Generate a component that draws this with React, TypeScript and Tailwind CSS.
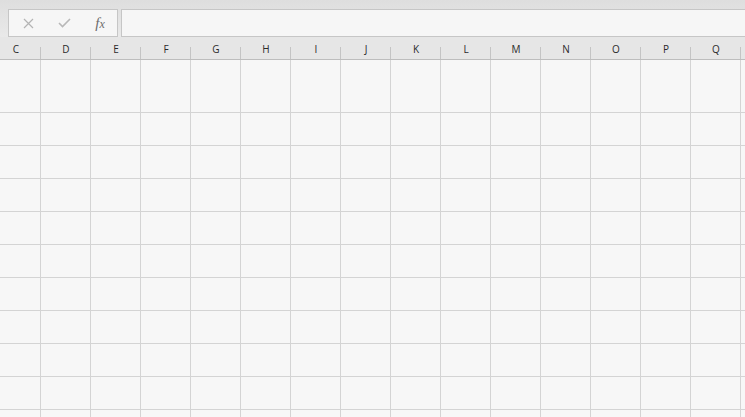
import React from "react";

const cols = ["C","D","E","F","G","H","I","J","K","L","M","N","O","P","Q",""];
const rowHeights = [52, 32, 32, 32, 32, 32, 32, 32, 32, 32, 32];

export default function App() {
  return (
    <div className="w-[745px] h-[417px] overflow-hidden bg-[#f7f7f7] flex flex-col" style={{ fontFamily: '"Open Sans", "Liberation Sans", sans-serif' }}>
      <div className="h-[37px] shrink-0 bg-gradient-to-b from-[#dedede] to-[#e9e9e9] flex items-start pt-[9px] pl-[8px] gap-[3px]">
        <div className="w-[110px] h-[28px] border border-[#c6c6c6] bg-[#f6f6f6] flex items-center">
          <div className="w-[37px] flex justify-center pl-[2px]">
            <svg width="11" height="11" viewBox="0 0 11 11"><path d="M1 1L10 10M10 1L1 10" stroke="#b4b4b4" strokeWidth="1.2" /></svg>
          </div>
          <div className="w-[37px] flex justify-center">
            <svg width="13" height="10" viewBox="0 0 13 10"><path d="M1 5L4.5 8.5L12 1" stroke="#b8b8b8" strokeWidth="1.6" fill="none" /></svg>
          </div>
          <div className="w-[34px] flex justify-center">
            <span className="text-[15px] italic text-[#6c6c6c] leading-none" style={{ fontFamily: '"Liberation Serif", serif' }}>f<span className="text-[12px]">x</span></span>
          </div>
        </div>
        <div className="flex-1 h-[28px] border-y border-l border-[#c6c6c6] bg-[#f6f6f6]" />
      </div>
      <div className="h-[23px] shrink-0 bg-[#e6e6e6] border-b border-[#bdbdbd] overflow-hidden">
        <div className="ml-[-9px] flex h-full">
          {cols.map((c, i) => (
            <div key={i} className="w-[50px] shrink-0 relative flex items-end justify-center pb-[1px]">
              <span className="text-[10px] text-[#2a2a2a] leading-[18px]">{c}</span>
              <div className="absolute right-0 bottom-0 w-px h-[12px] bg-[#c4c4c4]" />
            </div>
          ))}
        </div>
      </div>
      <div className="flex-1 overflow-hidden">
        {rowHeights.map((h, i) => (
          <div key={i} className="border-b border-[#d4d4d4] ml-[-9px] flex" style={{ height: h + 1 }}>
            {cols.map((c, j) => (
              <div key={j} className="w-[50px] shrink-0 border-r border-[#d4d4d4]" />
            ))}
          </div>
        ))}
      </div>
    </div>
  );
}
